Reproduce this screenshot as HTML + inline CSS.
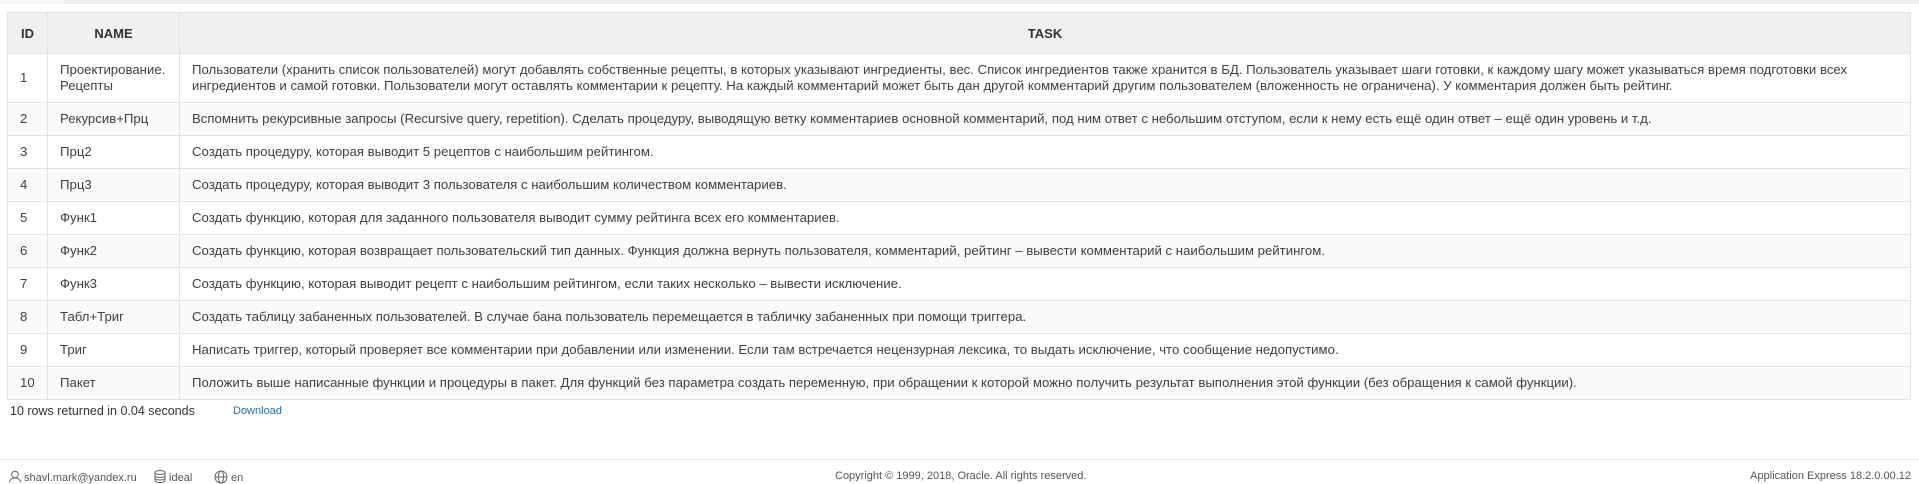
<!DOCTYPE html>
<html><head><meta charset="utf-8">
<style>
*{margin:0;padding:0;box-sizing:border-box}
body{width:1919px;height:483px;background:#fff;font-family:"Liberation Sans",sans-serif;color:#404040;position:relative;overflow:hidden}
.top{position:absolute;left:64px;top:0;right:0;height:4px;background:#eeeeee}
.topl{position:absolute;left:0;top:0;width:64px;height:4px;background:#f7f7f7}
table{position:absolute;left:7px;top:12px;width:1904px;border-collapse:collapse;font-size:13.2px}
th,td{border:1px solid #e3e3e3;text-align:left;vertical-align:middle}
th{background:#f0f0f0;height:41px;font-weight:bold;font-size:13px;color:#333;text-align:center}
td{height:33px;padding:0 12px;white-space:nowrap;line-height:16px}
tr.r1 td{height:49px}
tr:nth-child(odd) td{background:#fafafa}
tr:nth-child(even) td{background:#fff}
td.id{width:40px;padding-left:12px}
td.nm{width:132px;padding-left:12px}
.info{position:absolute;left:10px;top:404px;font-size:12.5px;color:#333}
.dl{position:absolute;left:233px;top:405px;font-size:11px;color:#2a6fb0}
.fline{position:absolute;left:0;right:0;top:459px;height:1px;background:#e3e3e3}
.foot{position:absolute;top:470px;font-size:11px;color:#555}
</style></head><body>
<div class="topl"></div><div class="top"></div>
<table>
<tr><th style="width:40px">ID</th><th style="width:132px">NAME</th><th>TASK</th></tr>
<tr class="r1"><td class="id">1</td><td class="nm">Проектирование.<br>Рецепты</td><td>Пользователи (хранить список пользователей) могут добавлять собственные рецепты, в которых указывают ингредиенты, вес. Список ингредиентов также хранится в БД. Пользователь указывает шаги готовки, к каждому шагу может указываться время подготовки всех<br>ингредиентов и самой готовки. Пользователи могут оставлять комментарии к рецепту. На каждый комментарий может быть дан другой комментарий другим пользователем (вложенность не ограничена). У комментария должен быть рейтинг.</td></tr>
<tr><td class="id">2</td><td class="nm">Рекурсив+Прц</td><td>Вспомнить рекурсивные запросы (Recursive query, repetition). Сделать процедуру, выводящую ветку комментариев основной комментарий, под ним ответ с небольшим отступом, если к нему есть ещё один ответ – ещё один уровень и т.д.</td></tr>
<tr><td class="id">3</td><td class="nm">Прц2</td><td>Создать процедуру, которая выводит 5 рецептов с наибольшим рейтингом.</td></tr>
<tr><td class="id">4</td><td class="nm">Прц3</td><td>Создать процедуру, которая выводит 3 пользователя с наибольшим количеством комментариев.</td></tr>
<tr><td class="id">5</td><td class="nm">Функ1</td><td>Создать функцию, которая для заданного пользователя выводит сумму рейтинга всех его комментариев.</td></tr>
<tr><td class="id">6</td><td class="nm">Функ2</td><td>Создать функцию, которая возвращает пользовательский тип данных. Функция должна вернуть пользователя, комментарий, рейтинг – вывести комментарий с наибольшим рейтингом.</td></tr>
<tr><td class="id">7</td><td class="nm">Функ3</td><td>Создать функцию, которая выводит рецепт с наибольшим рейтингом, если таких несколько – вывести исключение.</td></tr>
<tr><td class="id">8</td><td class="nm">Табл+Триг</td><td>Создать таблицу забаненных пользователей. В случае бана пользователь перемещается в табличку забаненных при помощи триггера.</td></tr>
<tr><td class="id">9</td><td class="nm">Триг</td><td>Написать триггер, который проверяет все комментарии при добавлении или изменении. Если там встречается нецензурная лексика, то выдать исключение, что сообщение недопустимо.</td></tr>
<tr><td class="id">10</td><td class="nm">Пакет</td><td>Положить выше написанные функции и процедуры в пакет. Для функций без параметра создать переменную, при обращении к которой можно получить результат выполнения этой функции (без обращения к самой функции).</td></tr>
</table>
<div class="info">10 rows returned in 0.04 seconds</div>
<div class="dl">Download</div>
<div class="fline"></div>
<div class="foot" style="left:8px"><svg width="13" height="13" viewBox="0 0 13 13" style="vertical-align:-2px" fill="none" stroke="#666"><circle cx="7" cy="4.5" r="3.3"/><path d="M1 12.5c1-3 3-4.5 6-4.5s5 1.5 6 4.5"/></svg> shavl.mark@yandex.ru</div>
<div class="foot" style="left:154px"><svg width="12" height="13" viewBox="0 0 12 13" style="vertical-align:-2px" fill="none" stroke="#666"><ellipse cx="6" cy="2.5" rx="5" ry="2"/><path d="M1 2.5v8c0 1.1 2.2 2 5 2s5-.9 5-2v-8M1 5.5c0 1.1 2.2 2 5 2s5-.9 5-2M1 8c0 1.1 2.2 2 5 2s5-.9 5-2"/></svg> ideal</div>
<div class="foot" style="left:214px"><svg width="14" height="14" viewBox="0 0 14 14" style="vertical-align:-3px" fill="none" stroke="#666"><circle cx="7" cy="7" r="6"/><ellipse cx="7" cy="7" rx="2.6" ry="6"/><path d="M1 7h12"/></svg> en</div>
<div class="foot" style="left:835px">Copyright © 1999, 2018, Oracle. All rights reserved.</div>
<div class="foot" style="right:8px">Application Express 18.2.0.00.12</div>
</body></html>
